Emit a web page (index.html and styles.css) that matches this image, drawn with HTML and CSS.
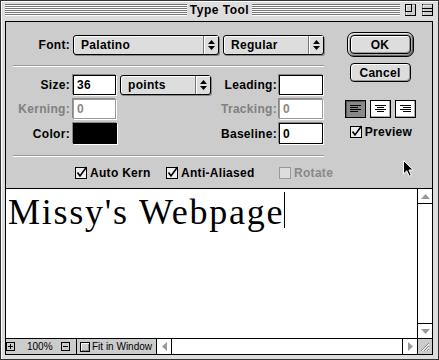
FILE: index.html
```html
<!doctype html>
<html lang="en">
<head>
    <meta charset="UTF-8">
    <title>Type Tool</title>
    <link rel="stylesheet" href="styles.css">
</head>
<body>
<div class="window">
    <div class="titlebar">
        <div class="stripes left"></div>
        <div class="title">Type Tool</div>
        <div class="stripes right"></div>
        <svg class="wbox zoombox" width="11" height="12" viewBox="0 0 11 12"><rect x="0.5" y="0.5" width="10" height="11" fill="#ccc" stroke="#000"/><path d="M1 1h9M1 1v10" stroke="#fff"/><rect x="0.5" y="0.5" width="6" height="7" fill="none" stroke="#000"/></svg>
        <svg class="wbox shadebox" width="11" height="12" viewBox="0 0 11 12"><rect x="0.5" y="0.5" width="10" height="11" fill="#ccc" stroke="#000"/><path d="M1 1h9M1 1v10" stroke="#fff"/><path d="M0 4.5h11M0 7.5h11" stroke="#000"/></svg>
    </div>
    <div class="content">
        <div class="panel">
            <div class="form">
                <div class="fontrow">
                    <label class="lbl">Font:</label>
                    <div class="popup pop-font"><span>Palatino</span><i class="arrows"><svg width="7" height="10" viewBox="0 0 7 10"><path d="M0 4L3.5 0L7 4Z M0 6L3.5 10L7 6Z"/></svg></i></div>
                    <div class="popup pop-style"><span>Regular</span><i class="arrows"><svg width="7" height="10" viewBox="0 0 7 10"><path d="M0 4L3.5 0L7 4Z M0 6L3.5 10L7 6Z"/></svg></i></div>
                </div>
                <div class="sep"></div>
                <div class="grid">
                    <label class="lbl">Size:</label>
                    <div class="field">36</div>
                    <div class="popup pop-units"><span>points</span><i class="arrows"><svg width="7" height="10" viewBox="0 0 7 10"><path d="M0 4L3.5 0L7 4Z M0 6L3.5 10L7 6Z"/></svg></i></div>
                    <label class="lbl r">Leading:</label>
                    <div class="field wide"></div>

                    <label class="lbl dim">Kerning:</label>
                    <div class="field off">0</div>
                    <span></span>
                    <label class="lbl r dim">Tracking:</label>
                    <div class="field wide off">0</div>

                    <label class="lbl">Color:</label>
                    <div class="swatch"></div>
                    <span></span>
                    <label class="lbl r">Baseline:</label>
                    <div class="field wide">0</div>
                </div>
                <div class="sep sep2"></div>
                <div class="checks">
                    <span class="chk w1"><svg width="12" height="12" viewBox="0 0 12 12"><rect x="0.5" y="0.5" width="11" height="11" fill="#eee" stroke="#000"/><path d="M2.5 5.5L5 9L11.5 0" fill="none" stroke="#000" stroke-width="1.6"/></svg>Auto Kern</span>
                    <span class="chk w2"><svg width="12" height="12" viewBox="0 0 12 12"><rect x="0.5" y="0.5" width="11" height="11" fill="#eee" stroke="#000"/><path d="M2.5 5.5L5 9L11.5 0" fill="none" stroke="#000" stroke-width="1.6"/></svg>Anti-Aliased</span>
                    <span class="chk off"><svg width="12" height="12" viewBox="0 0 12 12"><rect x="0.5" y="0.5" width="11" height="11" fill="#ddd" stroke="#999"/></svg>Rotate</span>
                </div>
            </div>
            <div class="side">
                <div class="okring"><div class="btn">OK</div></div>
                <div class="btn cancel">Cancel</div>
                <div class="aligns">
                    <div class="al on"><svg width="13" height="10" viewBox="0 0 13 10"><path d="M1 1.5h11M1 3.5h8M1 5.5h11M1 7.5h8" stroke="#000"/></svg></div>
                    <div class="al"><svg width="13" height="10" viewBox="0 0 13 10"><path d="M1 1.5h11M3 3.5h7M1 5.5h11M3 7.5h7" stroke="#000"/></svg></div>
                    <div class="al"><svg width="13" height="10" viewBox="0 0 13 10"><path d="M1 1.5h11M4 3.5h8M1 5.5h11M4 7.5h8" stroke="#000"/></svg></div>
                </div>
                <span class="chk preview"><svg width="12" height="12" viewBox="0 0 12 12"><rect x="0.5" y="0.5" width="11" height="11" fill="#eee" stroke="#000"/><path d="M2.5 5.5L5 9L11.5 0" fill="none" stroke="#000" stroke-width="1.6"/></svg>Preview</span>
            </div>
            <svg class="pointer" width="11" height="17" viewBox="0 0 11 17"><path d="M0.5 0.5V14L3.8 10.8L6.2 16.2L8.3 15.3L6 10H10.3Z" fill="#000" stroke="#fff"/></svg>
        </div>
        <div class="doc">
            <div class="page"><span class="typed">Missy's Webpage</span><span class="caret"></span></div>
            <div class="vscroll">
                <div class="sbtn up"><svg width="9" height="5" viewBox="0 0 9 5"><path d="M0 5L4.5 0L9 5Z" fill="#999"/></svg></div>
                <div class="track"></div>
                <div class="sbtn down"><svg width="9" height="5" viewBox="0 0 9 5"><path d="M0 0L4.5 5L9 0Z" fill="#999"/></svg></div>
            </div>
        </div>
        <div class="status">
            <div class="zoomctl">
                <svg class="zbtn" width="9" height="9" viewBox="0 0 9 9"><rect x="0.5" y="0.5" width="8" height="8" fill="#ccc" stroke="#000"/><path d="M2 4.5h5M4.5 2v5" stroke="#000"/></svg>
                <span class="pct">100%</span>
                <svg class="zbtn" width="9" height="9" viewBox="0 0 9 9"><rect x="0.5" y="0.5" width="8" height="8" fill="#ccc" stroke="#000"/><path d="M2 4.5h5" stroke="#000"/></svg>
                <div class="fit"><span class="fitbox"></span>Fit in Window</div>
            </div>
            <div class="hscroll">
                <div class="hbtn left"><svg width="5" height="9" viewBox="0 0 5 9"><path d="M5 0L0 4.5L5 9Z" fill="#999"/></svg></div>
                <div class="track"></div>
                <div class="hbtn right"><svg width="5" height="9" viewBox="0 0 5 9"><path d="M0 0L5 4.5L0 9Z" fill="#999"/></svg></div>
            </div>
            <div class="grow"><svg width="14" height="15" viewBox="0 0 14 15"><path d="M3 12L11 4M6 12L11 7M9 12L11 10" stroke="#888"/><path d="M4 12L11 5M7 12L11 8M10 12L11 11" stroke="#fff"/></svg></div>
        </div>
    </div>
</div>
</body>
</html>
```

FILE: styles.css
```css
*{
    margin:0;
    padding:0;
    box-sizing:border-box;
}
body{
    background:#fff;
    font-family:"Liberation Sans",Arial,sans-serif;
    font-size:12px;
    font-weight:bold;
    letter-spacing:.3px;
    color:#000;
}
.window{
    width:439px;
    height:360px;
    border:1px solid #333;
    background:#ddd;
    padding:0 5px 4px 4px;
    display:flex;
    flex-direction:column;
    box-shadow:inset 1px 1px #fff;
}
.titlebar{
    height:20px;
    padding-top:3px;
    display:flex;
    align-items:flex-start;
}
.stripes{
    height:12px;
    background:repeating-linear-gradient(#777 0 1px,#fff 1px 2px);
}
.stripes.left{
    width:182px;
}
.stripes.right{
    flex:1;
}
.title{
    width:65px;
    text-align:center;
    line-height:13px;
    letter-spacing:.5px;
}
.wbox{
    display:block;
    flex:none;
}
.zoombox{
    margin-left:5px;
}
.shadebox{
    margin-left:6px;
}
.content{
    flex:1;
    border:1px solid #000;
    background:#ccc;
    display:flex;
    flex-direction:column;
}
.panel{
    height:166px;
    display:flex;
    position:relative;
}
.form{
    width:334px;
}
.fontrow{
    margin-top:13px;
    height:20px;
    display:flex;
    align-items:center;
}
.lbl{
    display:block;
    text-align:right;
    padding-right:3px;
}
.fontrow .lbl{
    width:67px;
}
.lbl.r{
    padding-right:2px;
}
.lbl.dim{
    color:#808080;
}
.popup{
    height:20px;
    display:flex;
    border:1px solid #000;
    border-radius:3px;
    background:#ddd;
    box-shadow:inset 1px 1px #fff,1px 1px 0 #888;
}
.popup span{
    flex:1;
    padding-left:7px;
    line-height:18px;
}
.popup .arrows{
    width:15px;
    border-left:1px solid #777;
    display:flex;
    align-items:center;
    justify-content:center;
    box-shadow:inset 1px 1px #fff;
}
.pop-font{
    width:146px;
    margin-right:4px;
}
.pop-style{
    width:101px;
}
.pop-units{
    width:91px;
}
.sep{
    margin:10px 0 8px 7px;
    width:311px;
    border-top:1px solid #999;
    border-bottom:1px solid #fff;
}
.sep2{
    margin:11px 0 0 7px;
}
.grid{
    display:grid;
    grid-template-columns:67px 47px 91px 68px 44px;
    grid-template-rows:20px 20px 21px;
    row-gap:4px;
    align-items:center;
}
.field{
    width:43px;
    height:100%;
    background:#fff;
    border:1px solid #000;
    box-shadow:-1px -1px #888,1px 1px #fff;
    padding-left:3px;
    display:flex;
    align-items:center;
}
.field.wide{
    width:44px;
}
.field.off{
    border-color:#999;
    color:#888;
}
.swatch{
    width:44px;
    height:100%;
    background:#000;
    box-shadow:-1px -1px #888,1px 1px #fff;
}
.checks{
    margin-top:10px;
    padding-left:69px;
    height:12px;
    display:flex;
    align-items:center;
}
.chk{
    display:flex;
    align-items:center;
    gap:3px;
    line-height:12px;
}
.chk svg{
    overflow:visible;
    flex:none;
}
.chk.w1{
    width:91px;
}
.chk.w2{
    width:113px;
}
.chk.off{
    color:#888;
}
.side{
    width:80px;
    display:flex;
    flex-direction:column;
    align-items:center;
}
.okring{
    margin-top:10px;
    width:67px;
    height:25px;
    border:1px solid #000;
    border-radius:7px;
    padding:2px;
    background:#aaa;
    box-shadow:inset 1px 1px #eee,inset -1px -1px #666;
}
.btn{
    height:19px;
    display:flex;
    align-items:center;
    justify-content:center;
    border:1px solid #000;
    border-radius:4px;
    background:#ddd;
    box-shadow:inset 1px 1px #fff,inset -1px -1px #999;
}
.cancel{
    margin-top:6px;
    width:61px;
}
.aligns{
    margin-top:18px;
    display:flex;
    gap:4px;
}
.al{
    width:21px;
    height:18px;
    border:1px solid #000;
    background:#fff;
    display:flex;
    align-items:center;
    justify-content:center;
    box-shadow:inset -1px -1px #aaa;
}
.al.on{
    background:#888;
    box-shadow:inset 1px 1px #555;
}
.preview{
    margin-top:8px;
    margin-left:2px;
}
.pointer{
    position:absolute;
    left:397px;
    top:138px;
}
.doc{
    flex:1;
    display:flex;
    border-top:1px solid #000;
}
.page{
    flex:1;
    background:#fff;
    padding:3px 0 0 2px;
    font-family:"Liberation Serif","Times New Roman",serif;
    font-weight:normal;
    font-size:36px;
    line-height:40px;
    letter-spacing:1.75px;
}
.caret{
    display:inline-block;
    width:1px;
    height:36px;
    background:#000;
    vertical-align:-4px;
}
.vscroll{
    width:15px;
    border-left:1px solid #000;
    background:#fff;
    display:flex;
    flex-direction:column;
}
.vscroll .track{
    flex:1;
}
.sbtn{
    height:15px;
    display:flex;
    align-items:center;
    justify-content:center;
}
.sbtn.up{
    border-bottom:1px solid #000;
}
.sbtn.down{
    border-top:1px solid #000;
}
.status{
    height:16px;
    border-top:1px solid #000;
    display:flex;
    background:#ccc;
    font-family:"Liberation Sans",Arial,sans-serif;
    font-weight:normal;
    font-size:10px;
    letter-spacing:0;
}
.zoomctl{
    width:151px;
    display:flex;
    align-items:center;
    border-right:1px solid #000;
}
.zbtn{
    display:block;
    flex:none;
}
.pct{
    width:46px;
    padding-left:12px;
}
.fit{
    margin-left:6px;
    height:100%;
    flex:1;
    border-left:1px solid #000;
    padding-left:3px;
    display:flex;
    align-items:center;
}
.fitbox{
    width:10px;
    height:10px;
    margin-right:2px;
    border:1px solid #000;
    background:#ccc;
    box-shadow:inset 1px 1px #fff,inset -1px -1px #888;
}
.hscroll{
    flex:1;
    display:flex;
    background:#fff;
}
.hscroll .track{
    flex:1;
}
.hbtn{
    width:15px;
    display:flex;
    align-items:center;
    justify-content:center;
}
.hbtn.left{
    border-right:1px solid #000;
}
.hbtn.right{
    border-left:1px solid #000;
}
.grow{
    width:15px;
    border-left:1px solid #000;
    background:#ccc;
}
.grow svg{
    display:block;
}
```
